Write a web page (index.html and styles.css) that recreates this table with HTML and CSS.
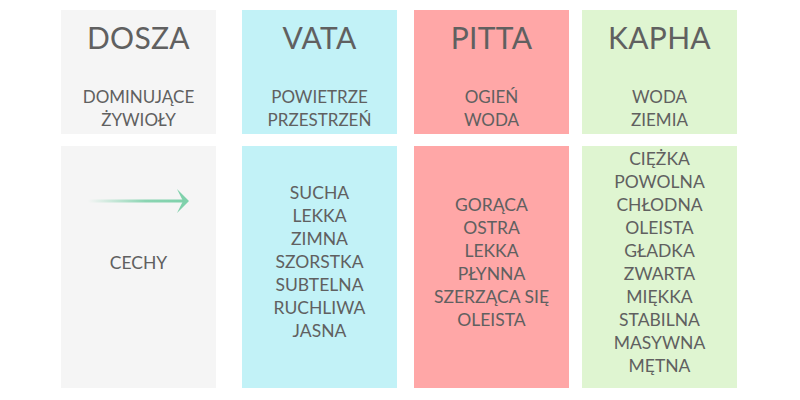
FILE: index.html
```html
<!DOCTYPE html>
<html lang="pl">
<head>
<meta charset="utf-8">
<link rel="stylesheet" href="styles.css">
</head>
<body>
<div class="table">
  <div class="col col-dosza">
    <div class="cell top grey">
      <div class="title">DOSZA</div>
      <div class="sub">DOMINUJĄCE<br>ŻYWIOŁY</div>
    </div>
    <div class="cell bottom grey first">
      <svg class="arrow" width="104" height="26" viewBox="0 0 104 26">
        <defs>
          <linearGradient id="fade" x1="0" y1="0" x2="1" y2="0">
            <stop offset="0" stop-color="#7fd1ab" stop-opacity="0"/>
            <stop offset="0.6" stop-color="#7fd1ab" stop-opacity="0.9"/>
            <stop offset="1" stop-color="#7fd1ab"/>
          </linearGradient>
        </defs>
        <rect x="0" y="11.5" width="96" height="3" fill="url(#fade)"/>
        <path d="M89 1 L101 13 L89 25 L95 13 Z" fill="#7fd1ab"/>
      </svg>
      <div class="list cechy">CECHY</div>
    </div>
  </div>
  <div class="col col-vata">
    <div class="cell top cyan">
      <div class="title">VATA</div>
      <div class="sub">POWIETRZE<br>PRZESTRZEŃ</div>
    </div>
    <div class="cell bottom cyan center">
      <div class="list">SUCHA<br>LEKKA<br>ZIMNA<br>SZORSTKA<br>SUBTELNA<br>RUCHLIWA<br>JASNA</div>
    </div>
  </div>
  <div class="col col-pitta">
    <div class="cell top pink">
      <div class="title">PITTA</div>
      <div class="sub">OGIEŃ<br>WODA</div>
    </div>
    <div class="cell bottom pink center">
      <div class="list">GORĄCA<br>OSTRA<br>LEKKA<br>PŁYNNA<br>SZERZĄCA SIĘ<br>OLEISTA</div>
    </div>
  </div>
  <div class="col col-kapha">
    <div class="cell top green">
      <div class="title">KAPHA</div>
      <div class="sub">WODA<br>ZIEMIA</div>
    </div>
    <div class="cell bottom green center">
      <div class="list">CIĘŻKA<br>POWOLNA<br>CHŁODNA<br>OLEISTA<br>GŁADKA<br>ZWARTA<br>MIĘKKA<br>STABILNA<br>MASYWNA<br>MĘTNA</div>
    </div>
  </div>
</div>
</body>
</html>
```

FILE: styles.css
```css
html, body {
  margin: 0;
  padding: 0;
  background: #ffffff;
}
body {
  width: 800px;
  height: 400px;
  overflow: hidden;
  font-family: Lato, "Open Sans", sans-serif;
  color: #606060;
}
.table {
  display: flex;
  padding-top: 10px;
}
.col {
  width: 155px;
  display: flex;
  flex-direction: column;
  gap: 12px;
}
.col-dosza { margin-left: 61px; }
.col-vata { margin-left: 26px; }
.col-pitta { margin-left: 17px; }
.col-kapha { margin-left: 13px; }

.cell {
  text-align: center;
  box-sizing: border-box;
}
.top {
  height: 124px;
  padding-top: 10px;
}
.bottom {
  height: 242px;
}
.grey { background: #f5f5f5; }
.cyan { background: #c2f2f7; }
.pink { background: #ffa7a7; }
.green { background: #dff5d1; }

.title {
  font-size: 30px;
  line-height: 34px;
  letter-spacing: 0.3px;
}
.sub {
  margin-top: 31px;
  font-size: 17px;
  line-height: 23px;
}
.center {
  display: flex;
  align-items: center;
  justify-content: center;
  padding-bottom: 11px;
}
.list {
  font-size: 17.5px;
  line-height: 23px;
}
.first {
  padding-top: 42px;
}
.arrow {
  display: block;
  margin-left: 27px;
}
.cechy {
  margin-top: 37px;
}
```
